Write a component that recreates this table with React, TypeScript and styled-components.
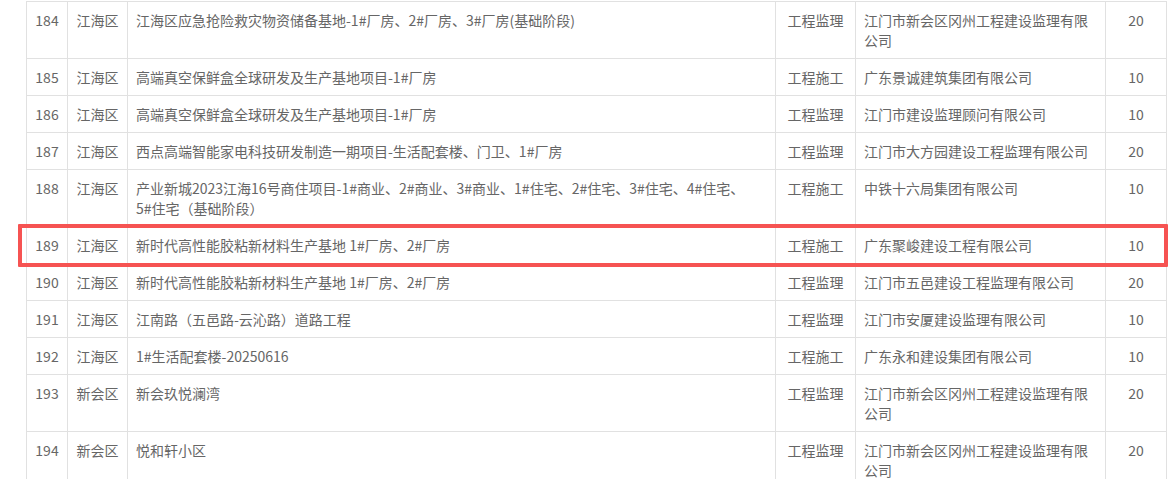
import React from "react";
import styled, { createGlobalStyle } from "styled-components";

const GlobalStyle = createGlobalStyle`
  html, body {
    margin: 0;
    padding: 0;
    background: #ffffff;
  }
  body {
    font-family: "Noto Sans CJK SC", "Noto Sans", sans-serif;
  }
`;

const Page = styled.div`
  padding: 1px 10px 0 26px;
`;

const Table = styled.table`
  width: 1141px;
  border-collapse: collapse;
  table-layout: fixed;
  font-size: 14px;
  line-height: 20px;
  color: #666666;
`;

const Col = styled.col<{ $w: number }>`
  width: ${(p) => p.$w}px;
`;

const Row = styled.tr<{ $marked?: boolean }>`
  position: ${(p) => (p.$marked ? "relative" : "static")};
`;

const Cell = styled.td<{ $align?: "left" | "center" }>`
  border: 1px solid #e1e1e1;
  padding: 8px 8px;
  vertical-align: top;
  text-align: ${(p) => p.$align ?? "left"};
  white-space: pre-line;
  word-break: break-all;
  position: static;
`;

const NarrowCell = styled(Cell)`
  padding: 8px 2px;
  white-space: nowrap;
`;

const Mark = styled.div`
  position: absolute;
  left: -9px;
  right: -1px;
  top: -3px;
  bottom: -3px;
  border: 4px solid #f65352;
  border-radius: 1px;
  pointer-events: none;
`;

type Item = {
  no: number;
  area: string;
  name: string;
  kind: string;
  company: string;
  score: number;
  marked?: boolean;
};

const rows: Item[] = [
  { no: 184, area: "江海区", name: "江海区应急抢险救灾物资储备基地-1#厂房、2#厂房、3#厂房(基础阶段)", kind: "工程监理", company: "江门市新会区冈州工程建设监理有限公司", score: 20 },
  { no: 185, area: "江海区", name: "高端真空保鲜盒全球研发及生产基地项目-1#厂房", kind: "工程施工", company: "广东景诚建筑集团有限公司", score: 10 },
  { no: 186, area: "江海区", name: "高端真空保鲜盒全球研发及生产基地项目-1#厂房", kind: "工程监理", company: "江门市建设监理顾问有限公司", score: 10 },
  { no: 187, area: "江海区", name: "西点高端智能家电科技研发制造一期项目-生活配套楼、门卫、1#厂房", kind: "工程监理", company: "江门市大方园建设工程监理有限公司", score: 20 },
  { no: 188, area: "江海区", name: "产业新城2023江海16号商住项目-1#商业、2#商业、3#商业、1#住宅、2#住宅、3#住宅、4#住宅、\n5#住宅（基础阶段）", kind: "工程施工", company: "中铁十六局集团有限公司", score: 10 },
  { no: 189, area: "江海区", name: "新时代高性能胶粘新材料生产基地 1#厂房、2#厂房", kind: "工程施工", company: "广东聚峻建设工程有限公司", score: 10, marked: true },
  { no: 190, area: "江海区", name: "新时代高性能胶粘新材料生产基地 1#厂房、2#厂房", kind: "工程监理", company: "江门市五邑建设工程监理有限公司", score: 20 },
  { no: 191, area: "江海区", name: "江南路（五邑路-云沁路）道路工程", kind: "工程监理", company: "江门市安厦建设监理有限公司", score: 10 },
  { no: 192, area: "江海区", name: "1#生活配套楼-20250616", kind: "工程施工", company: "广东永和建设集团有限公司", score: 10 },
  { no: 193, area: "新会区", name: "新会玖悦澜湾", kind: "工程监理", company: "江门市新会区冈州工程建设监理有限公司", score: 20 },
  { no: 194, area: "新会区", name: "悦和轩小区", kind: "工程监理", company: "江门市新会区冈州工程建设监理有限公司", score: 20 },
];

export default function App() {
  return (
    <>
      <GlobalStyle />
      <Page>
        <Table>
          <colgroup>
            <Col $w={41} />
            <Col $w={60} />
            <Col $w={648} />
            <Col $w={80} />
            <Col $w={250} />
            <Col $w={61} />
          </colgroup>
          <tbody>
            {rows.map((r) => (
              <Row key={r.no} $marked={r.marked}>
                <NarrowCell $align="center">
                  {r.marked && <Mark />}
                  {r.no}
                </NarrowCell>
                <NarrowCell $align="center">{r.area}</NarrowCell>
                <Cell>{r.name}</Cell>
                <NarrowCell $align="center">{r.kind}</NarrowCell>
                <Cell>{r.company}</Cell>
                <NarrowCell $align="center">{r.score}</NarrowCell>
              </Row>
            ))}
          </tbody>
        </Table>
      </Page>
    </>
  );
}
